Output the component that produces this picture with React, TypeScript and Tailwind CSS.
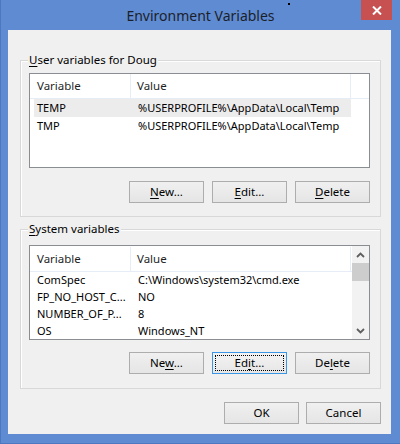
const userRows = [
  ["TEMP", "%USERPROFILE%\\AppData\\Local\\Temp"],
  ["TMP", "%USERPROFILE%\\AppData\\Local\\Temp"],
];

const systemRows = [
  ["ComSpec", "C:\\Windows\\system32\\cmd.exe"],
  ["FP_NO_HOST_C...", "NO"],
  ["NUMBER_OF_P...", "8"],
  ["OS", "Windows_NT"],
];

type BtnProps = { pre: string; key1: string; post: string; focused?: boolean };

const Btn = ({ pre, key1, post, focused }: BtnProps) => {
  return (
    <button
      className={
        focused
          ? "w-[75px] h-[22px] border border-[#3c96e6] bg-linear-to-b from-[#f3f3f3] to-[#e6e6e6] text-[11.5px] text-black outline-1 outline-dotted outline-black -outline-offset-4 leading-none"
          : "w-[75px] h-[22px] border border-[#adadad] bg-linear-to-b from-[#f0f0f0] to-[#e5e5e5] text-[11.5px] text-black leading-none"
      }
    >
      {pre}
      <span className="underline underline-offset-2">{key1}</span>
      {post}
    </button>
  );
};

const Chevron = ({ down }: { down?: boolean }) => (
  <svg width="9" height="6" viewBox="0 0 9 6">
    <path
      d={down ? "M1 1 L4.5 4.5 L8 1" : "M1 5 L4.5 1.5 L8 5"}
      fill="none"
      stroke="#5f5f5f"
      strokeWidth="1.8"
    />
  </svg>
);

const Header = () => (
  <div className="flex h-[25px] border-b border-[#e6edf7] text-[11.5px] text-[#1f1f1f]">
    <div className="w-[101px] shrink-0 pl-[7px] flex items-center border-r border-[#e6edf7]">Variable</div>
    <div className="w-[220px] shrink-0 pl-[6px] flex items-center border-r border-[#e6edf7]">Value</div>
  </div>
);

const UserList = () => (
  <div className="ml-[8px] mt-[5px] w-[341px] h-[95px] border border-[#8a8d92] bg-white">
    <Header />
    {userRows.map(([name, value], i) => (
      <div
        key={name}
        className={
          i === 0
            ? "ml-[4px] w-[317px] h-[18px] flex items-center bg-[#ececec] text-[11px] text-black"
            : "ml-[4px] w-[317px] h-[18px] flex items-center text-[11px] text-black"
        }
      >
        <div className="w-[97px] shrink-0 pl-[3px]">{name}</div>
        <div className="pl-[7px] whitespace-nowrap">{value}</div>
      </div>
    ))}
  </div>
);

const SystemList = () => (
  <div className="ml-[8px] mt-[8px] w-[341px] h-[95px] border border-[#8a8d92] bg-white flex">
    <div className="flex-1">
      <div className="h-[1px]" />
      <Header />
      {systemRows.map(([name, value]) => (
        <div key={name} className="h-[17px] flex items-center text-[11px] text-black">
          <div className="w-[101px] shrink-0 pl-[7px] whitespace-nowrap">{name}</div>
          <div className="pl-[7px] whitespace-nowrap">{value}</div>
        </div>
      ))}
    </div>
    <div className="w-[17px] bg-[#f2f2f2] flex flex-col">
      <div className="h-[17px] flex items-center justify-center">
        <Chevron />
      </div>
      <div className="h-[18px] bg-[#cdcdcd]" />
      <div className="flex-1" />
      <div className="h-[17px] flex items-center justify-center">
        <Chevron down />
      </div>
    </div>
  </div>
);

const App = () => {
  return (
    <div className="w-[400px] h-[444px] bg-[#5f8bd2] flex flex-col font-['Noto_Sans',sans-serif] border-l border-b border-[#4d77c0]">
      <div className="h-[30px] relative flex items-center justify-center">
        <span className="text-[14px] text-[#1b1f2a] pt-[1px]">Environment Variables</span>
        <div className="absolute left-[287px] top-[3px] w-[2px] h-[2px] bg-black" />
        <div className="absolute right-[8px] top-0 w-[31px] h-[20px] bg-[#c75050] flex items-center justify-center">
          <svg width="10" height="9" viewBox="0 0 10 9">
            <path d="M1 0.5 L9 8.5 M9 0.5 L1 8.5" stroke="white" strokeWidth="2" />
          </svg>
        </div>
      </div>

      <div className="ml-[7px] w-[383px] h-[404px] bg-[#f0f0f0] flex flex-col">
        {/* user variables */}
        <div className="mt-[30px] ml-[12px] w-[361px] h-[157px] border border-[#d8d8d8] shadow-[inset_1px_1px_0_#ffffff] flex flex-col">
          <div className="-mt-[9px] ml-[7px] w-fit px-[1px] bg-[#f0f0f0] text-[11.5px] leading-[16px] text-black">
            <span className="underline underline-offset-2">U</span>ser variables for Doug
          </div>
          <UserList />
          <div className="ml-[8px] mt-[13px] w-[341px] flex justify-end gap-[8px]">
            <Btn pre="" key1="N" post="ew..." />
            <Btn pre="" key1="E" post="dit..." />
            <Btn pre="" key1="D" post="elete" />
          </div>
        </div>

        {/* system variables */}
        <div className="mt-[12px] ml-[12px] w-[361px] h-[160px] border border-[#d8d8d8] shadow-[inset_1px_1px_0_#ffffff] flex flex-col">
          <div className="-mt-[9px] ml-[7px] w-fit px-[1px] bg-[#f0f0f0] text-[11.5px] leading-[16px] text-black">
            <span className="underline underline-offset-2">S</span>ystem variables
          </div>
          <SystemList />
          <div className="ml-[8px] mt-[12px] w-[341px] flex justify-end gap-[8px]">
            <Btn pre="Ne" key1="w" post="..." />
            <Btn pre="Ed" key1="i" post="t..." focused />
            <Btn pre="De" key1="l" post="ete" />
          </div>
        </div>

        <div className="mt-[13px] ml-[12px] w-[361px] flex justify-end gap-[7px]">
          <Btn pre="OK" key1="" post="" />
          <Btn pre="Cancel" key1="" post="" />
        </div>
      </div>
    </div>
  );
};

export default App;
